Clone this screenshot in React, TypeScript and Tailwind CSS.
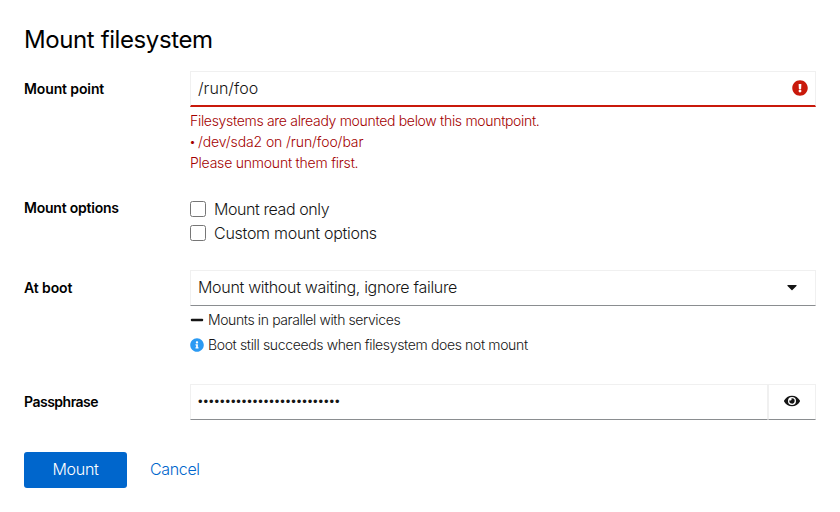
import type { ReactNode } from 'react';
import { FaCaretDown, FaExclamationCircle, FaEye, FaInfoCircle, FaMinus } from 'react-icons/fa';

function Field({ label, labelClass, children, className }: { label: string; labelClass: string; children: ReactNode; className: string }) {
  return (
    <div className={`flex items-start ${className}`}>
      <div className={`w-[166px] shrink-0 text-sm font-semibold text-black ${labelClass}`}>{label}</div>
      <div className="min-w-0 flex-1">{children}</div>
    </div>
  );
}

function Check({ label, textClass }: { label: string; textClass: string }) {
  return (
    <label className="flex h-6 items-center gap-2">
      <span className="mb-[2px] h-4 w-4 rounded-[2.5px] border border-[#767676] bg-white" />
      <span className={`mb-[2px] text-base leading-[22px] font-light ${textClass}`}>{label}</span>
    </label>
  );
}

export default function App() {
  return (
    <form className="h-[512px] w-[840px] bg-white p-6 font-['Inter','Noto_Sans',sans-serif] whitespace-nowrap text-[#151515]">
      <h1 className="h-[31px] text-2xl leading-[31px] font-normal tracking-[-0.4px] text-black">Mount filesystem</h1>

      <Field label="Mount point" labelClass="mt-[7px] leading-[21px] tracking-[-0.12px]" className="mt-4 h-[103px]">
        <div className="flex h-9 items-center justify-between border border-b-2 border-[#f0f0f0] border-b-[#c9190b] pr-[7px] pb-[2px] pl-[7px]">
          <span className="text-base font-light tracking-[0.05px]">/run/foo</span>
          <FaExclamationCircle className="size-4 text-[#c9190b]" />
        </div>
        <div className="mt-[3px] text-sm leading-[21px] font-light text-[#a30000]">
          <div className="tracking-[-0.31px]">Filesystems are already mounted below this mountpoint.</div>
          <div className="flex h-[21px] tracking-[-0.1px]">
            <span className="w-2 text-[10px] leading-5 font-semibold">•</span>
            <span>/dev/sda2 on /run/foo/bar</span>
          </div>
          <div className="tracking-[-0.22px]">Please unmount them first.</div>
        </div>
      </Field>

      <Field label="Mount options" labelClass="leading-[19px] tracking-[-0.22px]" className="mt-6 h-12">
        <Check label="Mount read only" textClass="tracking-[-0.42px]" />
        <Check label="Custom mount options" textClass="tracking-[-0.27px]" />
      </Field>

      <Field label="At boot" labelClass="mt-[7px] leading-[21px] tracking-[-0.1px]" className="mt-6 h-[90px]">
        <div className="flex h-9 items-center justify-between border border-[#f0f0f0] border-b-[#8a8d90] pr-[18px] pb-[2px] pl-[7px]">
          <span className="text-base font-light tracking-[-0.31px]">Mount without waiting, ignore failure</span>
          <FaCaretDown className="h-4 w-[10px]" />
        </div>
        <div className="mt-[3px] flex h-[21px] items-center gap-1 text-sm font-light tracking-[-0.39px]">
          <FaMinus className="size-[14px]" />
          <span>Mounts in parallel with services</span>
        </div>
        <div className="mt-1 flex h-[21px] items-center gap-1 text-sm font-light tracking-[-0.36px]">
          <FaInfoCircle className="size-[14px] text-[#2b9af3]" />
          <span>Boot still succeeds when filesystem does not mount</span>
        </div>
      </Field>

      <Field label="Passphrase" labelClass="mt-[7px] leading-[21px] tracking-[-0.5px]" className="mt-6 h-9">
        <div className="flex h-9">
          <div className="flex flex-1 items-center border border-[#f0f0f0] border-b-[#8a8d90] pb-px pl-[7px]">
            <span className="font-['Liberation_Sans',sans-serif] text-[13px] leading-6 tracking-[0.93px]">••••••••••••••••••••••••••</span>
          </div>
          <div className="flex w-12 items-center justify-center border border-[#f0f0f0] border-b-[#8a8d90] pb-[2px]">
            <FaEye className="h-4 w-4" />
          </div>
        </div>
      </Field>

      <div className="mt-8 flex h-9 items-center">
        <button type="button" className="h-9 w-[103px] rounded-[3px] bg-[#0066cc] pb-[2px] text-base leading-6 font-light tracking-[-0.25px] text-white">Mount</button>
        <button type="button" className="ml-[23px] pb-[2px] text-base leading-6 font-light tracking-[-0.35px] text-[#0066cc]">Cancel</button>
      </div>
    </form>
  );
}
